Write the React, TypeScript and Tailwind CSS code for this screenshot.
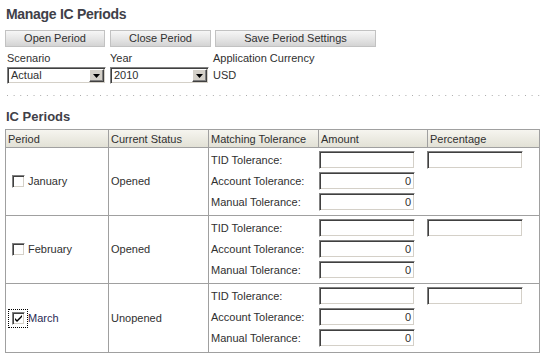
import React from "react";

const inset =
  "border border-t-[#808080] border-l-[#808080] border-b-white border-r-white shadow-[inset_1px_1px_0_#404040,inset_-1px_-1px_0_#d4d0c8] bg-white";

function Field({ value }: { value?: string }) {
  return (
    <div className={`${inset} h-[18px] w-[96px] flex items-center justify-end pr-[3px] text-[11px] leading-none`}>
      {value}
    </div>
  );
}

function Btn({ label, w }: { label: string; w: string }) {
  return (
    <div
      className={`${w} h-[17px] flex items-center justify-center border border-[#c2c2c2] bg-linear-to-b from-[#f6f6f6] via-[#e6e6e6] to-[#d4d4d4] text-[11px] leading-none`}
    >
      {label}
    </div>
  );
}

function Select({ value }: { value: string }) {
  return (
    <div className={`${inset} h-[17px] w-[99px] flex items-center justify-between`}>
      <span className="pl-[3px] text-[11px] leading-none">{value}</span>
      <div className="mr-[1px] h-[13px] w-[15px] flex items-center justify-center bg-[#d4d0c8] border border-t-white border-l-white border-b-[#404040] border-r-[#404040] shadow-[inset_-1px_-1px_0_#808080]">
        <svg width="7" height="4" viewBox="0 0 7 4">
          <path d="M0 0h7L3.5 4z" fill="#000" />
        </svg>
      </div>
    </div>
  );
}

function Check({ checked, focus }: { checked?: boolean; focus?: boolean }) {
  return (
    <div
      className={`ml-[2px] w-[20px] h-[19px] flex items-center justify-center ${
        focus ? "border border-dotted border-black" : "border border-transparent"
      }`}
    >
      <div className={`${inset} w-[13px] h-[13px] flex items-center justify-center`}>
        {checked && (
          <svg width="9" height="9" viewBox="0 0 9 9">
            <path d="M1 4l2 2 5-5v2L3 8 1 6z" fill="#000" />
          </svg>
        )}
      </div>
    </div>
  );
}

function Row({
  month,
  status,
  checked,
  last,
}: {
  month: string;
  status: string;
  checked?: boolean;
  last?: boolean;
}) {
  const lines: [string, string | undefined, boolean][] = [
    ["TID Tolerance:", "", true],
    ["Account Tolerance:", "0", false],
    ["Manual Tolerance:", "0", false],
  ];
  return (
    <div
      className={`grid grid-cols-[103px_100px_330px] h-[68px] ${
        last ? "" : "border-b border-[#a0a0a0]"
      }`}
    >
      <div className="border-r border-[#a0a0a0] flex items-center">
        <Check checked={checked} focus={checked} />
        <span className={`text-[11px] leading-none ${checked ? "text-[#2a2a55]" : ""}`}>{month}</span>
      </div>
      <div className="border-r border-[#a0a0a0] flex items-center pl-[2px] text-[11px] leading-none">
        {status}
      </div>
      <div className="flex flex-col gap-[3px] pt-[3px]">
        {lines.map(([label, val, pct]) => (
          <div key={label} className="flex items-center h-[18px]">
            <div className="w-[110px] pl-[2px] text-[11px] leading-none">{label}</div>
            <Field value={val} />
            {pct && (
              <div className="ml-[12px]">
                <Field />
              </div>
            )}
          </div>
        ))}
      </div>
    </div>
  );
}

export default function App() {
  const head = ["Period", "Current Status", "Matching Tolerance", "Amount", "Percentage"];
  return (
    <div className="w-[541px] h-[353px] overflow-hidden bg-white pl-[5px] text-[#303030] font-['Liberation_Sans',Arial,sans-serif] text-[11px]">
      <div className="pt-[6px] pl-[1px] h-[23px] text-[14px] leading-[17px] font-bold text-[#404048] tracking-[-0.3px]">
        Manage IC Periods
      </div>
      <div className="mt-[7px] flex">
        <Btn label="Open Period" w="w-[100px]" />
        <div className="ml-[5px]">
          <Btn label="Close Period" w="w-[101px]" />
        </div>
        <div className="ml-[4px]">
          <Btn label="Save Period Settings" w="w-[161px]" />
        </div>
      </div>
      <div className="ml-[2px] mt-[5px] grid grid-cols-[103px_103px_auto] leading-[13px]">
        <div>Scenario</div>
        <div>Year</div>
        <div>Application Currency</div>
      </div>
      <div className="ml-[2px] mt-[2px] grid grid-cols-[103px_103px_auto] items-center">
        <Select value="Actual" />
        <Select value="2010" />
        <div className="leading-none">USD</div>
      </div>
      <div className="mt-[11px] ml-[2px] h-px bg-[linear-gradient(to_right,#a8a8a8_1px,transparent_1px)] bg-size-[6.65px_1px]" />
      <div className="mt-[13px] pl-[1px] h-[20px] text-[13px] leading-[16px] font-bold text-[#404048]">
        IC Periods
      </div>
      <div className="w-[535px] border border-[#a0a0a0]">
        <div className="grid grid-cols-[103px_100px_110px_109px_111px] h-[18px] border-b border-[#a0a0a0] bg-linear-to-b from-[#f6f5ef] to-[#e2e1d6]">
          {head.map((h, i) => (
            <div
              key={h}
              className={`flex items-center pl-[2px] pt-[1px] leading-none ${
                i < 4 ? "border-r border-[#a0a0a0]" : ""
              }`}
            >
              {h}
            </div>
          ))}
        </div>
        <Row month="January" status="Opened" />
        <Row month="February" status="Opened" />
        <Row month="March" status="Unopened" checked last />
      </div>
    </div>
  );
}
